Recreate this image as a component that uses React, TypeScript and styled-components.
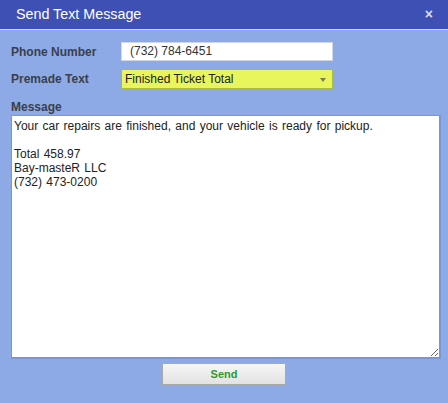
import React from "react";
import styled, { createGlobalStyle } from "styled-components";

const Global = createGlobalStyle`
  html, body { margin: 0; padding: 0; background: #8eaae6; }
  body { font-family: "Liberation Sans", Arial, sans-serif; }
`;

const Dialog = styled.div`
  width: 448px;
  height: 403px;
  background: #8eaae6;
  display: flex;
  flex-direction: column;
  overflow: hidden;
`;

const TitleBar = styled.div`
  height: 29px;
  background: #3e50b4;
  border-bottom: 1px solid #c9d6f4;
  display: flex;
  align-items: center;
  justify-content: space-between;
  padding: 0 15px 0 16px;
  box-sizing: content-box;
`;

const Title = styled.span`
  color: #ffffff;
  font-size: 14.3px;
  line-height: 29px;
`;

const Close = styled.span`
  color: #d8def2;
  font-size: 14px;
  font-weight: bold;
  line-height: 29px;
`;

const Body = styled.div`
  display: flex;
  flex-direction: column;
  padding: 12px 7px 0 11px;
`;

const Row = styled.div<{ $gap?: number }>`
  display: grid;
  grid-template-columns: 110px 212px;
  align-items: center;
  margin-bottom: ${(p) => p.$gap ?? 0}px;
`;

const Label = styled.label`
  font-size: 12px;
  font-weight: bold;
  color: #3a3f4a;
  line-height: 14px;
`;

const TextInput = styled.div`
  height: 19px;
  box-sizing: border-box;
  background: #ffffff;
  border: 1px solid #cfd6e6;
  font-size: 12px;
  color: #333;
  line-height: 17px;
  padding-left: 8px;
`;

const Select = styled.div`
  height: 20px;
  box-sizing: border-box;
  background: #e8f55c;
  border: 1px solid #a9bb3c;
  font-size: 12px;
  color: #222;
  line-height: 18px;
  padding-left: 3px;
  display: flex;
  justify-content: space-between;
  align-items: center;
`;

const Arrow = styled.span`
  width: 0;
  height: 0;
  border-left: 3px solid transparent;
  border-right: 3px solid transparent;
  border-top: 4px solid #7a7d55;
  margin-right: 6px;
  margin-top: 1px;
`;

const MessageLabel = styled(Label)`
  display: block;
  margin-top: 11px;
  margin-bottom: 1px;
`;

const Message = styled.textarea`
  width: 430px;
  height: 244px;
  box-sizing: border-box;
  margin: 0;
  border: 2px solid #7996dc;
  border-top-width: 1px;
  border-left-width: 1px;
  background: #ffffff;
  font-family: "Liberation Sans", Arial, sans-serif;
  font-size: 12px;
  line-height: 14px;
  word-spacing: 1px;
  color: #222;
  padding: 3px 2px;
  resize: both;
  outline: none;
`;

const ButtonRow = styled.div`
  display: flex;
  justify-content: center;
  margin-top: 4px;
  padding-right: 4px;
`;

const SendButton = styled.button`
  width: 124px;
  height: 22px;
  border: 1px solid #a9a9a9;
  background: linear-gradient(#f6f6f6, #e2e2e2);
  color: #2e9a2e;
  font-family: "Liberation Sans", Arial, sans-serif;
  font-size: 11px;
  font-weight: bold;
  padding: 0;
`;

const text =
  "Your car repairs are finished, and your vehicle is ready for pickup.\n\nTotal 458.97\nBay-masteR LLC\n(732) 473-0200";

export default function App() {
  return (
    <>
      <Global />
      <Dialog>
        <TitleBar>
          <Title>Send Text Message</Title>
          <Close>×</Close>
        </TitleBar>
        <Body>
          <Row $gap={8}>
            <Label>Phone Number</Label>
            <TextInput>(732) 784-6451</TextInput>
          </Row>
          <Row>
            <Label>Premade Text</Label>
            <Select>
              Finished Ticket Total
              <Arrow />
            </Select>
          </Row>
          <MessageLabel>Message</MessageLabel>
          <Message defaultValue={text} spellCheck />
          <ButtonRow>
            <SendButton>Send</SendButton>
          </ButtonRow>
        </Body>
      </Dialog>
    </>
  );
}
